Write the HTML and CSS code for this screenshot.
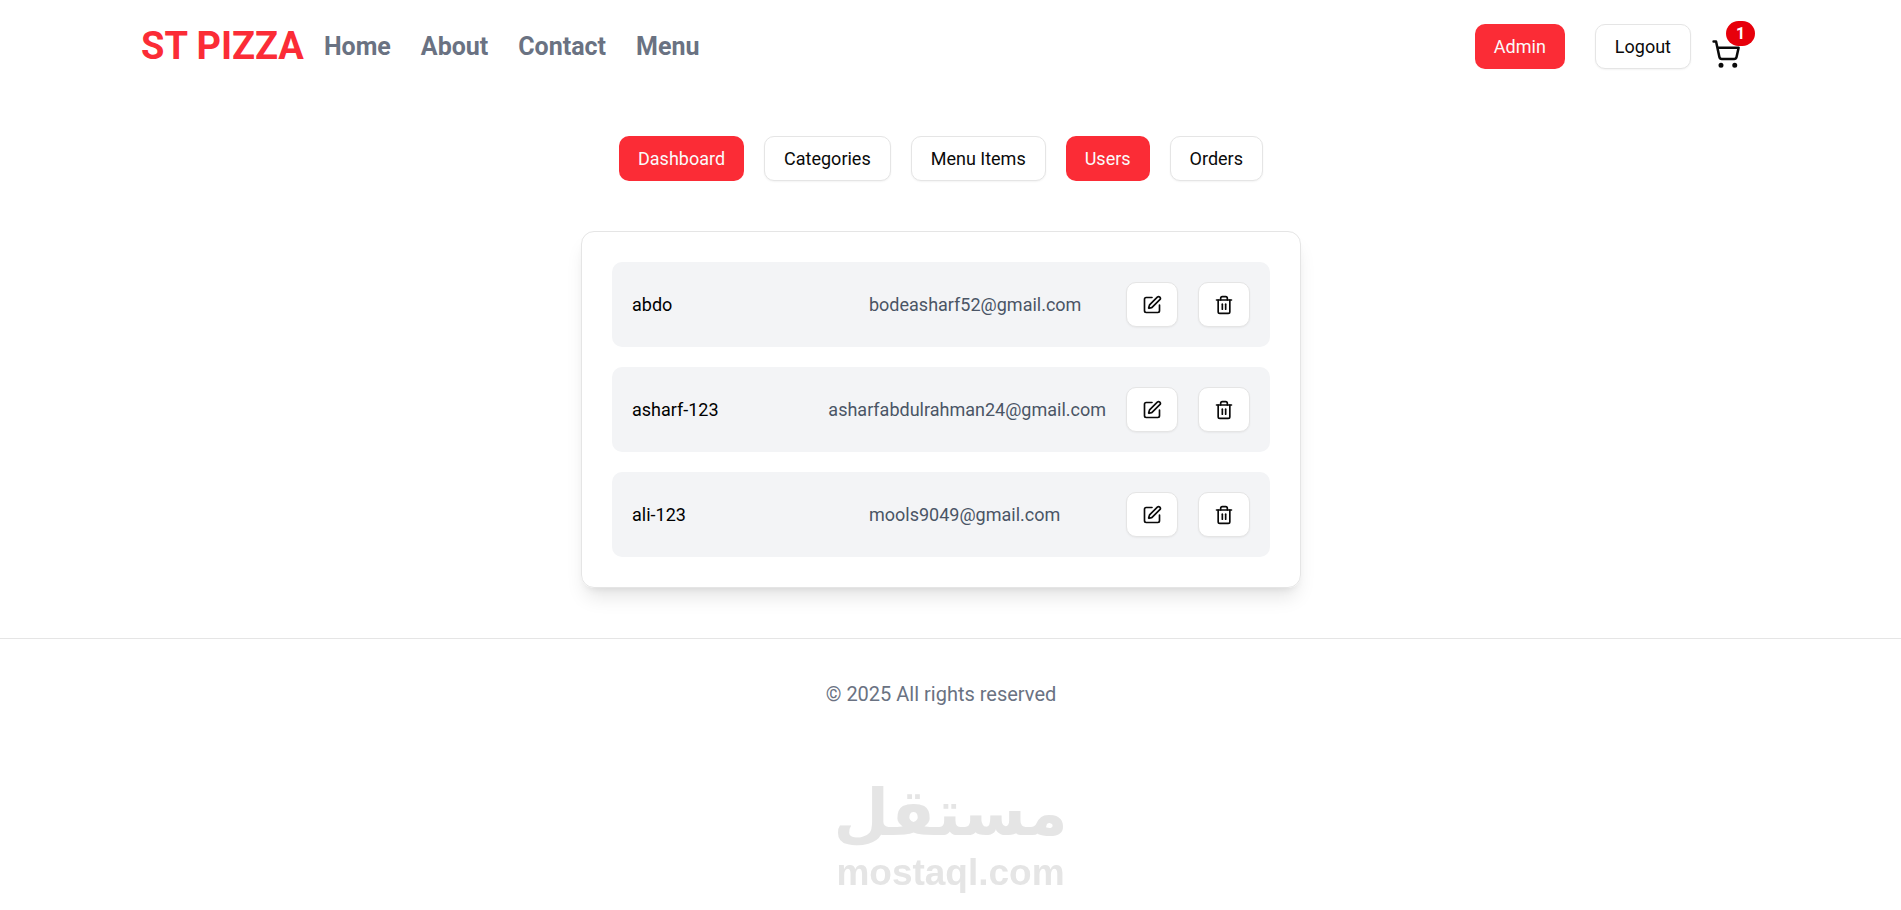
FILE: index.html
```html
<!DOCTYPE html>
<html lang="en">

<head>
    <meta charset="UTF-8">
    <meta name="viewport" content="width=device-width, initial-scale=1.0">
    <title>ST Pizza - Users</title>
    <link rel="stylesheet" href="styles.css">
</head>

<body>
    <svg class="sprite" xmlns="http://www.w3.org/2000/svg">
        <symbol id="icon-edit" viewBox="0 0 24 24">
            <path d="M12 3H5a2 2 0 0 0-2 2v14a2 2 0 0 0 2 2h14a2 2 0 0 0 2-2v-7" />
            <path
                d="M18.375 2.625a1 1 0 0 1 3 3l-9.013 9.014a2 2 0 0 1-.853.505l-2.873.84a.5.5 0 0 1-.62-.62l.84-2.873a2 2 0 0 1 .506-.852z" />
        </symbol>
        <symbol id="icon-trash" viewBox="0 0 24 24">
            <path d="M3 6h18" />
            <path d="M19 6v14c0 1-1 2-2 2H7c-1 0-2-1-2-2V6" />
            <path d="M8 6V4c0-1 1-2 2-2h4c1 0 2 1 2 2v2" />
            <path d="M10 11v6" />
            <path d="M14 11v6" />
        </symbol>
    </svg>

    <header class="container header">
        <div class="header-left">
            <a class="logo" href="#">ST PIZZA</a>
            <nav class="navbar">
                <a href="#">Home</a>
                <a href="#">About</a>
                <a href="#">Contact</a>
                <a href="#">Menu</a>
            </nav>
        </div>
        <div class="header-right">
            <a class="btn btn-primary" href="#">Admin</a>
            <button class="btn logout-btn" type="button">Logout</button>
            <a class="cart" href="#" aria-label="Cart">
                <svg class="cart-icon" viewBox="0 0 24 24">
                    <circle cx="8" cy="21" r="1" />
                    <circle cx="19" cy="21" r="1" />
                    <path d="M2.05 2.05h2l2.66 12.42a2 2 0 0 0 2 1.58h9.78a2 2 0 0 0 1.95-1.57l1.65-7.43H5.12" />
                </svg>
                <span class="cart-count">1</span>
            </a>
        </div>
    </header>

    <main>
        <nav class="tabs">
            <a class="btn btn-primary" href="#">Dashboard</a>
            <a class="btn" href="#">Categories</a>
            <a class="btn" href="#">Menu Items</a>
            <a class="btn btn-primary" href="#">Users</a>
            <a class="btn" href="#">Orders</a>
        </nav>

        <ul class="card">
            <li class="user">
                <div class="user-info">
                    <span class="user-name">abdo</span>
                    <span class="user-email">bodeasharf52@gmail.com</span>
                </div>
                <button class="btn" type="button" aria-label="Edit abdo"><svg class="icon"><use href="#icon-edit" /></svg></button>
                <button class="btn" type="button" aria-label="Delete abdo"><svg class="icon"><use href="#icon-trash" /></svg></button>
            </li>
            <li class="user">
                <div class="user-info">
                    <span class="user-name">asharf-123</span>
                    <span class="user-email">asharfabdulrahman24@gmail.com</span>
                </div>
                <button class="btn" type="button" aria-label="Edit asharf-123"><svg class="icon"><use href="#icon-edit" /></svg></button>
                <button class="btn" type="button" aria-label="Delete asharf-123"><svg class="icon"><use href="#icon-trash" /></svg></button>
            </li>
            <li class="user">
                <div class="user-info">
                    <span class="user-name">ali-123</span>
                    <span class="user-email">mools9049@gmail.com</span>
                </div>
                <button class="btn" type="button" aria-label="Edit ali-123"><svg class="icon"><use href="#icon-edit" /></svg></button>
                <button class="btn" type="button" aria-label="Delete ali-123"><svg class="icon"><use href="#icon-trash" /></svg></button>
            </li>
        </ul>
    </main>

    <footer>
        <p>&copy; 2025 All rights reserved</p>
    </footer>

    <div class="watermark">
        <span class="watermark-ar" lang="ar" dir="rtl">مستقل</span>
        <span class="watermark-en">mostaql.com</span>
    </div>
</body>

</html>
```
FILE: styles.css
```css
* {
    box-sizing: border-box;
    margin: 0;
    padding: 0;
}

body {
    font-family: Roboto, sans-serif;
    font-size: 18px;
    line-height: 25px;
    color: #0a0a0a;
    background-color: #ffffff;
    /* room for the scrollbar */
    padding-right: 19px;
}

a {
    color: inherit;
    text-decoration: none;
}

svg {
    fill: none;
    stroke: currentColor;
    stroke-width: 2;
    stroke-linecap: round;
    stroke-linejoin: round;
}

.sprite {
    display: none;
}

.container {
    max-width: 1600px;
    margin: 0 auto;
}

/* header */
.header {
    display: flex;
    justify-content: space-between;
    align-items: center;
    padding: 24px 0;
}

.header-left {
    display: flex;
    align-items: center;
    gap: 20px;
}

.logo {
    font-size: 38px;
    line-height: 45px;
    font-weight: 700;
    color: #fb2c36;
}

.navbar {
    display: flex;
    gap: 30px;
    font-size: 25px;
    line-height: 35px;
    font-weight: 700;
    color: #6a7282;
}

.header-right {
    display: flex;
    align-items: center;
}

.logout-btn {
    margin-left: 30px;
    margin-right: 20px;
}

.btn {
    display: inline-flex;
    align-items: center;
    justify-content: center;
    height: 45px;
    padding: 0 19px;
    font-family: inherit;
    font-size: 18px;
    color: #0a0a0a;
    background-color: #ffffff;
    border: 1px solid #e5e5e5;
    border-radius: 10px;
    box-shadow: 0 1px 2px rgba(0, 0, 0, 0.05);
    cursor: pointer;
}

.btn-primary {
    color: #fafafa;
    background-color: #fb2c36;
    border: none;
    box-shadow: none;
}

.cart {
    position: relative;
    margin-top: 15px;
}

.cart-icon {
    display: block;
    width: 30px;
    height: 30px;
}

.cart-count {
    position: absolute;
    top: -18px;
    left: 15px;
    padding: 0 10px;
    border-radius: 13px;
    font-size: 16px;
    font-weight: 700;
    color: #ffffff;
    background-color: #e7000b;
}

/* admin tabs */
.tabs {
    display: flex;
    flex-wrap: wrap;
    justify-content: center;
    gap: 20px;
    padding-top: 43px;
}

/* users list */
.card {
    display: flex;
    flex-direction: column;
    gap: 20px;
    max-width: 720px;
    margin: 50px auto;
    padding: 30px;
    list-style: none;
    border: 1px solid #e5e5e5;
    border-radius: 13px;
    box-shadow: 0 13px 19px -4px rgba(0, 0, 0, 0.1), 0 5px 8px -5px rgba(0, 0, 0, 0.1);
}

.user {
    display: flex;
    align-items: center;
    gap: 20px;
    padding: 20px;
    background-color: #f3f4f6;
    border-radius: 10px;
}

.user .btn {
    width: 52px;
    padding: 0;
}

.user-info {
    display: flex;
    flex: 1;
    justify-content: space-between;
}

.user-name {
    color: #000000;
}

.user-email {
    min-width: 237px;
    color: #4a5565;
}

.icon {
    width: 20px;
    height: 20px;
}

/* footer */
footer {
    margin-right: -19px;
    padding: 40px 19px 40px 0;
    border-top: 1px solid #e5e5e5;
    font-size: 20px;
    line-height: 30px;
    text-align: center;
    color: #6a7282;
}

.watermark {
    position: fixed;
    left: 0;
    right: 0;
    bottom: 16px;
    display: flex;
    flex-direction: column;
    align-items: center;
    color: #e5e5e5;
    font-weight: 700;
    pointer-events: none;
}

.watermark-ar {
    font-family: "DejaVu Sans", sans-serif;
    font-size: 64px;
    line-height: 76px;
}

.watermark-en {
    font-family: "Liberation Sans", sans-serif;
    font-size: 37px;
    line-height: 43px;
}
```
